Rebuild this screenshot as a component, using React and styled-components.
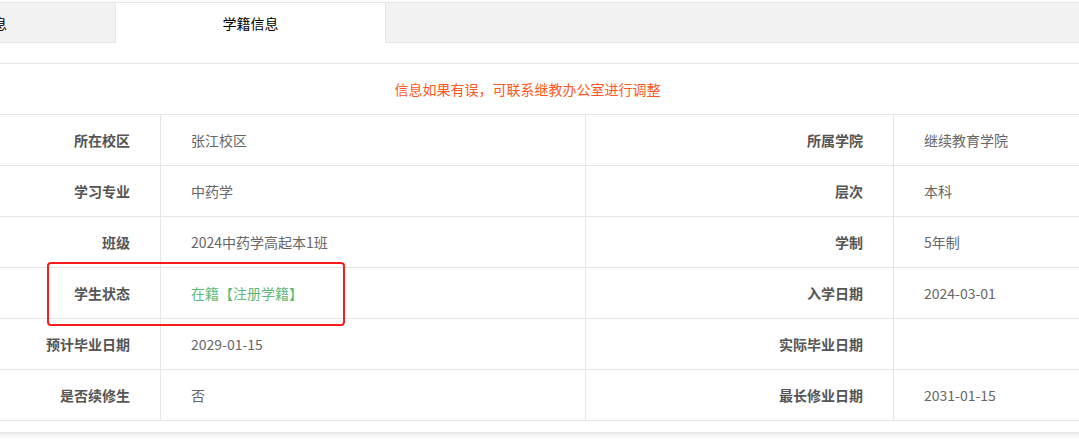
import React from "react";
import styled, { createGlobalStyle } from "styled-components";

const GlobalStyle = createGlobalStyle`
  html, body {
    margin: 0;
    padding: 0;
    background: #fff;
    overflow: hidden;
  }
  body {
    font-family: "Noto Sans CJK SC", "Noto Sans", sans-serif;
    font-size: 14px;
    color: #666;
  }
`;

const Page = styled.div`
  position: relative;
  width: 1079px;
  height: 443px;
  overflow: hidden;
  padding-top: 2px;
  box-sizing: border-box;
`;

const Card = styled.div`
  margin-left: -158px;
  width: 1371px;
  border: 1px solid #e6e6e6;
  background: #fff;
  box-shadow: 0 2px 5px rgba(0, 0, 0, 0.1);
  box-sizing: border-box;
`;

const TabTitle = styled.ul`
  display: flex;
  margin: 0;
  padding: 0;
  list-style: none;
  height: 40px;
  box-sizing: border-box;
  background: #f2f2f2;
  border-bottom: 1px solid #e6e6e6;
`;

const Tab = styled.li`
  width: ${(p) => (p.$active ? "271px" : "272px")};
  height: ${(p) => (p.$active ? "40px" : "39px")};
  box-sizing: border-box;
  display: flex;
  align-items: center;
  justify-content: center;
  font-size: 14px;
  color: #000;
  background: ${(p) => (p.$active ? "#fff" : "transparent")};
  border-left: ${(p) => (p.$active ? "1px solid #e6e6e6" : "none")};
  border-right: ${(p) => (p.$active ? "1px solid #e6e6e6" : "none")};
  padding-bottom: ${(p) => (p.$active ? "1px" : "0")};
`;

const TabContent = styled.div`
  padding: 20px 10px 11px;
`;

const Table = styled.div`
  display: grid;
  grid-template-columns: 307px 425px 308px 1fr;
  border-top: 1px solid #e6e6e6;
  border-left: 1px solid #e6e6e6;
`;

const Notice = styled.div`
  grid-column: 1 / -1;
  height: 51px;
  box-sizing: border-box;
  border-bottom: 1px solid #e6e6e6;
  border-right: 1px solid #e6e6e6;
  display: flex;
  align-items: center;
  justify-content: center;
  color: #ff5722;
  font-size: 14px;
`;

const Cell = styled.div`
  height: 51px;
  box-sizing: border-box;
  border-bottom: 1px solid #e6e6e6;
  border-right: 1px solid #e6e6e6;
  display: flex;
  align-items: center;
  font-size: 14px;
  white-space: nowrap;
`;

const Label = styled(Cell)`
  justify-content: flex-end;
  padding-right: 30px;
  font-weight: 700;
  color: #555;
`;

const Value = styled(Cell)`
  padding-left: 30px;
  color: ${(p) => (p.$tone === "green" ? "#5fb878" : "#666")};
`;

const Highlight = styled.div`
  position: absolute;
  left: 47px;
  top: 262px;
  width: 298px;
  height: 64px;
  box-sizing: border-box;
  border: 2px solid #fa1c1c;
  border-radius: 4px;
  pointer-events: none;
`;

const rows = [
  ["所在校区", "张江校区", "所属学院", "继续教育学院"],
  ["学习专业", "中药学", "层次", "本科"],
  ["班级", "2024中药学高起本1班", "学制", "5年制"],
  ["学生状态", "在籍【注册学籍】", "入学日期", "2024-03-01", "green"],
  ["预计毕业日期", "2029-01-15", "实际毕业日期", ""],
  ["是否续修生", "否", "最长修业日期", "2031-01-15"],
];

export default function App() {
  return (
    <>
      <GlobalStyle />
      <Page>
        <Card>
          <TabTitle>
            <Tab>个人信息</Tab>
            <Tab $active>学籍信息</Tab>
          </TabTitle>
          <TabContent>
            <Table>
              <Notice>信息如果有误，可联系继教办公室进行调整</Notice>
              {rows.map(([l1, v1, l2, v2, tone]) => (
                <React.Fragment key={l1}>
                  <Label>{l1}</Label>
                  <Value $tone={tone}>{v1}</Value>
                  <Label>{l2}</Label>
                  <Value>{v2}</Value>
                </React.Fragment>
              ))}
            </Table>
          </TabContent>
        </Card>
        <Highlight />
      </Page>
    </>
  );
}
